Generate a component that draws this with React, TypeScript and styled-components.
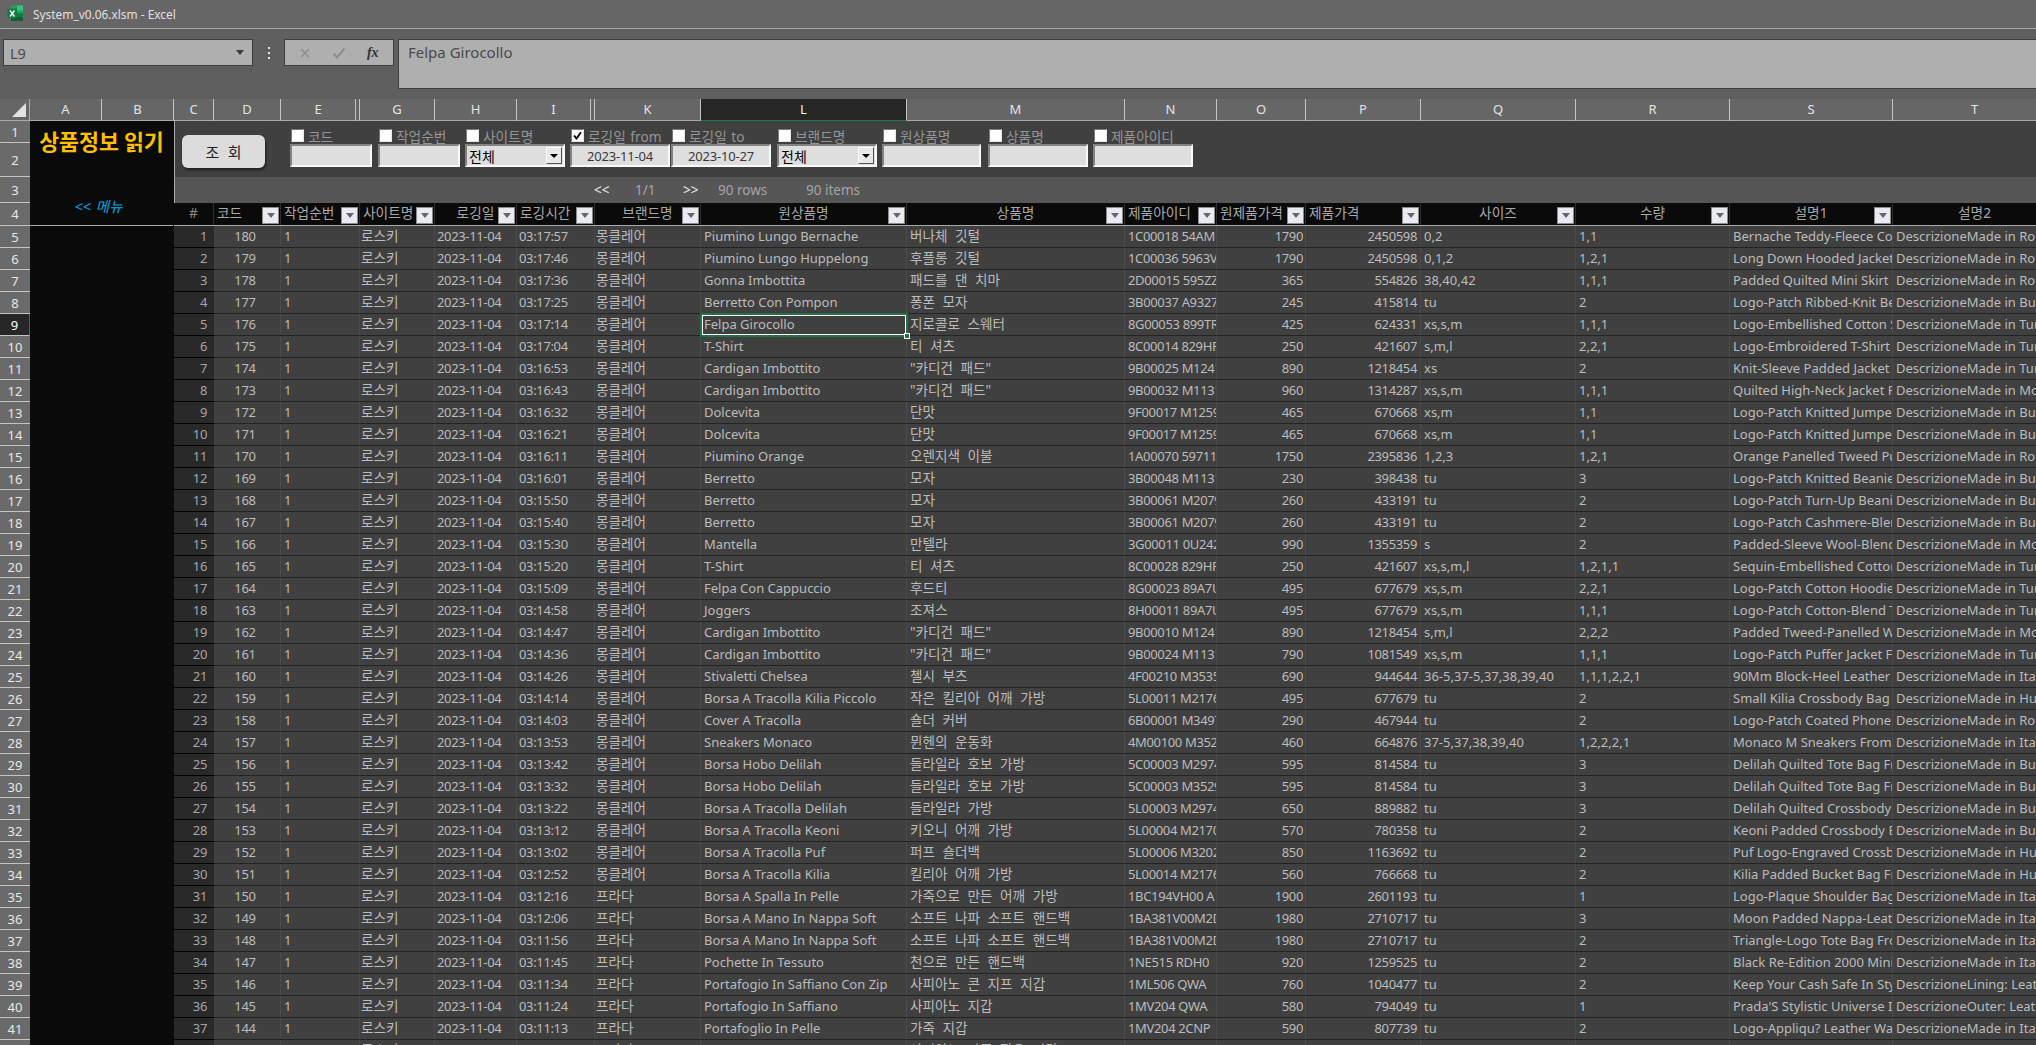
import React from 'react';
import styled, { createGlobalStyle } from 'styled-components';

const FONT = '"Noto Sans", "Noto Sans CJK KR", sans-serif';
const COLS = '40px 67px 79px 75px 82px 78px 106px 206px 218px 92px 89px 115px 155px 154px 163px 164px';

const Global = createGlobalStyle`
  html, body { margin: 0; padding: 0; background: #5f5f5f; overflow: hidden; }
  * { box-sizing: border-box; }
`;

const Page = styled.div`
  width: 2036px; height: 1045px; overflow: hidden; display: flex; flex-direction: column;
  font-family: ${FONT}; background: #5f5f5f;
`;
const TitleBar = styled.div`
  height: 29px; flex: none; display: flex; align-items: center; gap: 9px; padding: 0 0 1px 7px;
  background: #666; border-bottom: 1px solid #a8a8a8; color: #e0e0e0; font-size: 11.9px;
`;
const FormulaBar = styled.div`
  height: 70px; flex: none; display: flex; align-items: flex-start; padding: 10px 0 0 3px; background: #5f5f5f;
`;
const NameBox = styled.div`
  width: 250px; height: 27px; display: flex; align-items: center; justify-content: space-between;
  padding: 0 6px; background: #afafaf; border: 1px solid #3f3f3f; color: #4a4a4a; font-size: 14.5px;
`;
const Caret = styled.span`
  width: 0; height: 0; border-left: 4px solid transparent; border-right: 4px solid transparent;
  border-top: 5px solid #3a3a3a; margin-right: 2px;
`;
const Dots = styled.div`
  width: 31px; height: 27px; display: flex; flex-direction: column; align-items: center; justify-content: center; gap: 3px;
`;
const Dot = styled.i`width: 2px; height: 2px; background: #e6e6e6; display: block;`;
const FxBox = styled.div`
  width: 110px; height: 27px; display: flex; align-items: center; justify-content: space-around; padding: 0 4px;
  background: #afafaf; border: 1px solid #3f3f3f; color: #8d8d8d;
`;
const Fx = styled.span`
  font-family: "Liberation Serif", serif; font-style: italic; font-weight: 700; font-size: 14px; color: #333;
`;
const FormulaInput = styled.div`
  flex: 1; margin-left: 4px; height: 50px; padding: 2px 9px; background: #afafaf;
  border: 1px solid #3f3f3f; border-right: 0; color: #4a4a4a; font-size: 15px;
`;
const ColStrip = styled.div`display: flex; flex: none; height: 22px; background: #666; width: 2100px;`;
const Corner = styled.div`width: 30px; flex: none; display: flex; align-items: center; justify-content: flex-end; padding: 0 3px 0 0; border-bottom: 1px solid #aaa; border-right: 1px solid #aaa;`;
const ColHead = styled.div<{ $w: number; $on?: boolean }>`
  width: ${p => p.$w}px; flex: none; text-align: center; font-size: 13px; line-height: 21px;
  color: ${p => (p.$on ? '#f2f2f2' : '#e4e4e4')};
  background: ${p => (p.$on ? '#262626' : 'transparent')};
  border-right: 1px solid #c4c4c4;
  border-bottom: ${p => (p.$on ? '1px solid #1f7a4a' : '1px solid #aaa')};
`;
const Body = styled.div`display: flex; flex: 1; min-height: 0;`;
const RowHeads = styled.div`width: 30px; flex: none; display: flex; flex-direction: column;`;
const RowHead = styled.div<{ $h: number; $on?: boolean }>`
  height: ${p => p.$h}px; flex: none; display: flex; align-items: center; justify-content: center;
  font-size: 13px; color: ${p => (p.$on ? '#fff' : '#e8e8e8')};
  background: ${p => (p.$on ? '#262626' : '#6a6a6a')};
  border-bottom: 1px solid #c4c4c4;
  border-right: ${p => (p.$on ? '1px solid #1f7a4a' : '0')};
`;
const Side = styled.aside`
  width: 144px; flex: none; background: #0a0a0a; border-right: 1px solid transparent; position: relative;
  display: flex; flex-direction: column; align-items: center;
`;
const SideTitle = styled.h1`
  margin: 6px 0 0; color: #ffc000; font-family: "Noto Sans CJK KR", sans-serif; font-weight: 700; font-size: 21.7px; line-height: 28px;
`;
const MenuLink = styled.div`
  margin-top: 40px; color: #00a8e8; font-style: italic; font-size: 14.5px; line-height: 22px; margin-left: -6px; word-spacing: 1px;
`;
const FreezeLine = styled.div`
  position: absolute; left: 0; right: 0; top: 104px; height: 1px; background: #aaa;
`;
const Main = styled.main`
  flex: 1; min-width: 0; border-left: 1px solid #aaa; margin-left: 0; display: flex; flex-direction: column; width: 1883px;
`;
const FilterBar = styled.div`
  height: 56px; flex: none; background: #404040; display: flex; padding: 6px 0 0 7px; width: 1900px;
`;
const SearchBtn = styled.div`
  width: 83px; height: 33px; margin: 8px 25px 0 0; flex: none; border-radius: 6px; background: #dcdcdc;
  box-shadow: 1px 2px 3px rgba(0,0,0,.55); color: #222; font-size: 15px; display: flex; align-items: center; justify-content: center;
  font-family: "Noto Sans CJK KR", sans-serif; word-spacing: 5px;
`;
const FilterItem = styled.div<{ $w: number; $mr: number }>`
  width: ${p => p.$w}px; margin-right: ${p => p.$mr}px; flex: none; display: flex; flex-direction: column;
`;
const LabelRow = styled.div`
  height: 17px; display: flex; align-items: center; padding-left: 1px; gap: 4px; color: #959595; font-size: 13.7px; white-space: nowrap; word-spacing: 1px;
`;
const Check = styled.span`
  width: 13px; height: 13px; flex: none; background: #fff; border: 1px solid; border-color: #7a7a7a #e6e6e6 #e6e6e6 #7a7a7a;
  display: flex; align-items: center; justify-content: center;
`;
const Field = styled.div`
  height: 23px; background: #dedede; margin-top: 0; border: 2px solid; border-color: #828282 #fafafa #fafafa #828282;
  display: flex; align-items: center; justify-content: center; color: #3a3a3a; font-size: 13px; letter-spacing: -.2px;
`;
const SelectField = styled(Field)`
  justify-content: space-between; color: #000; font-family: "Noto Sans CJK KR", sans-serif; font-size: 14px; padding: 0 1px 0 2px; letter-spacing: 0;
`;
const SelectBtn = styled.span`
  width: 16px; height: 17px; background: #e8e8e8; border: 1px solid; border-color: #fff #555 #555 #fff;
  display: flex; align-items: center; justify-content: center;
`;
const BlackCaret = styled.span`
  width: 0; height: 0; border-left: 4px solid transparent; border-right: 4px solid transparent; border-top: 4px solid #000;
`;
const Pager = styled.div`
  height: 26px; flex: none; background: #565656; display: flex; align-items: center; padding-left: 419px; color: #a0a0a0; font-size: 13.5px; width: 1900px;
`;
const PagerItem = styled.span<{ $w: number; $bright?: boolean }>`
  width: ${p => p.$w}px; flex: none; color: ${p => (p.$bright ? '#ededed' : '#a4a4a4')};
`;
const Head = styled.div`
  display: grid; grid-template-columns: ${COLS}; height: 23px; flex: none; background: #0a0a0a;
  border-bottom: 1px solid #aaa; width: 1883px; margin-left: -1px;
`;
const HeadCell = styled.div<{ $center?: boolean; $dim?: boolean }>`
  position: relative; font-size: 13.7px; line-height: 20px; white-space: nowrap; overflow: hidden;
  text-align: ${p => (p.$center ? 'center' : 'left')}; padding: 0 3px;
  color: ${p => (p.$dim ? '#8a8a8a' : '#a8a8a8')}; border-right: 1px solid #2e2e2e;
`;
const FilterBtn = styled.span`
  position: absolute; right: 1px; top: 4px; width: 17px; height: 17px; background: #eaeaf2;
  border: 1px solid #8c8c8c; display: flex; align-items: center; justify-content: center;
`;
const GrayCaret = styled.span`
  width: 0; height: 0; border-left: 4px solid transparent; border-right: 4px solid transparent; border-top: 5px solid #666;
`;
const Row = styled.div`
  display: grid; grid-template-columns: ${COLS}; height: 22px; flex: none; background: #404040;
  border-bottom: 1px solid #232323; width: 1883px; margin-left: -1px;
`;
const Cell = styled.div<{ $align?: string; $pad?: number }>`
  position: relative; font-size: 13px; line-height: 21px; white-space: nowrap; overflow: hidden;
  text-align: ${p => p.$align || 'left'}; padding: 0 ${p => p.$pad ?? 3}px;
  color: #bcbcbc; border-right: 1px solid #4b4b4b;
`;
const NumCell = styled(Cell)`letter-spacing: -.35px;`;
const CodeCell = styled(NumCell)`text-align: center; padding: 0 4px 0 0;`;
const KoCell = styled(Cell)`font-size: 13.6px; line-height: 19px; word-spacing: 4px;`;
const IndexCell = styled(NumCell)`
  background: #292929; text-align: right; padding-right: 7px; color: #a6a6a6; border-right: 0;
  box-shadow: 0 1px 0 #000;
`;
const SelectedCell = styled(Cell)`overflow: visible; z-index: 2;`;
const SelectionBox = styled.div`
  position: absolute; left: -1px; right: -2px; top: -1px; bottom: -2px; border: 2px solid #217346; pointer-events: none;
  box-shadow: inset 0 0 0 1px #fff;
`;
const Handle = styled.div`
  position: absolute; right: -4px; bottom: -4px; width: 6px; height: 6px; background: #217346; border: 1px solid #fff;
`;

const COL_HEADS: [string, number][] = [
  ['A', 72], ['B', 72], ['C', 40], ['D', 67], ['E', 75], ['', 4], ['G', 75], ['H', 82], ['I', 74], ['', 4],
  ['K', 106], ['L', 206], ['M', 218], ['N', 92], ['O', 89], ['P', 115], ['Q', 155], ['R', 154], ['S', 163], ['T', 164],
];

const FILTERS: { label: string; kind: 'text' | 'select'; value?: string; checked?: boolean; w: number; mr: number }[] = [
  { label: '코드', kind: 'text', w: 82, mr: 6 },
  { label: '작업순번', kind: 'text', w: 82, mr: 5 },
  { label: '사이트명', kind: 'select', value: '전체', w: 100, mr: 5 },
  { label: '로깅일 from', kind: 'text', value: '2023-11-04', checked: true, w: 100, mr: 1 },
  { label: '로깅일 to', kind: 'text', value: '2023-10-27', w: 100, mr: 6 },
  { label: '브랜드명', kind: 'select', value: '전체', w: 100, mr: 5 },
  { label: '원상품명', kind: 'text', w: 99, mr: 7 },
  { label: '상품명', kind: 'text', w: 100, mr: 5 },
  { label: '제품아이디', kind: 'text', w: 100, mr: 0 },
];

const HEADS: { t: string; c?: boolean; btn?: boolean; dim?: boolean }[] = [
  { t: '#', c: true, dim: true }, { t: '코드', btn: true }, { t: '작업순번', btn: true }, { t: '사이트명', btn: true },
  { t: '로깅일', c: true, btn: true }, { t: '로깅시간', btn: true }, { t: '브랜드명', c: true, btn: true },
  { t: '원상품명', c: true, btn: true }, { t: '상품명', c: true, btn: true }, { t: '제품아이디', btn: true },
  { t: '원제품가격', btn: true }, { t: '제품가격', btn: true }, { t: '사이즈', c: true, btn: true },
  { t: '수량', c: true, btn: true }, { t: '설명1', c: true, btn: true }, { t: '설명2', c: true },
];

type D = [string, string, string, string, string, string, string, string, string, string, string];
const M = '몽클레어';
const P = '프라다';
const DATA: D[] = [
  ['03:17:57', M, 'Piumino Lungo Bernache', '버나체 깃털', '1C00018 54AM', '1790', '2450598', '0,2', '1,1', 'Bernache Teddy-Fleece Coat', 'Made in Romania'],
  ['03:17:46', M, 'Piumino Lungo Huppelong', '후플롱 깃털', '1C00036 5963V', '1790', '2450598', '0,1,2', '1,2,1', 'Long Down Hooded Jacket', 'Made in Romania'],
  ['03:17:36', M, 'Gonna Imbottita', '패드를 댄 치마', '2D00015 595ZZ', '365', '554826', '38,40,42', '1,1,1', 'Padded Quilted Mini Skirt', 'Made in Romania'],
  ['03:17:25', M, 'Berretto Con Pompon', '퐁폰 모자', '3B00037 A9327', '245', '415814', 'tu', '2', 'Logo-Patch Ribbed-Knit Beanie', 'Made in Bulgaria'],
  ['03:17:14', M, 'Felpa Girocollo', '지로콜로 스웨터', '8G00053 899TR', '425', '624331', 'xs,s,m', '1,1,1', 'Logo-Embellished Cotton Sweater', 'Made in Turkey'],
  ['03:17:04', M, 'T-Shirt', '티 셔츠', '8C00014 829HP', '250', '421607', 's,m,l', '2,2,1', 'Logo-Embroidered T-Shirt', 'Made in Turkey'],
  ['03:16:53', M, 'Cardigan Imbottito', '"카디건 패드"', '9B00025 M1241', '890', '1218454', 'xs', '2', 'Knit-Sleeve Padded Jacket', 'Made in Turkey'],
  ['03:16:43', M, 'Cardigan Imbottito', '"카디건 패드"', '9B00032 M1131', '960', '1314287', 'xs,s,m', '1,1,1', 'Quilted High-Neck Jacket From', 'Made in Moldova'],
  ['03:16:32', M, 'Dolcevita', '단맛', '9F00017 M1259', '465', '670668', 'xs,m', '1,1', 'Logo-Patch Knitted Jumper', 'Made in Bulgaria'],
  ['03:16:21', M, 'Dolcevita', '단맛', '9F00017 M1259', '465', '670668', 'xs,m', '1,1', 'Logo-Patch Knitted Jumper', 'Made in Bulgaria'],
  ['03:16:11', M, 'Piumino Orange', '오렌지색 이불', '1A00070 59711', '1750', '2395836', '1,2,3', '1,2,1', 'Orange Panelled Tweed Puffer', 'Made in Romania'],
  ['03:16:01', M, 'Berretto', '모자', '3B00048 M1131', '230', '398438', 'tu', '3', 'Logo-Patch Knitted Beanie', 'Made in Bulgaria'],
  ['03:15:50', M, 'Berretto', '모자', '3B00061 M2079', '260', '433191', 'tu', '2', 'Logo-Patch Turn-Up Beanie', 'Made in Bulgaria'],
  ['03:15:40', M, 'Berretto', '모자', '3B00061 M2079', '260', '433191', 'tu', '2', 'Logo-Patch Cashmere-Blend', 'Made in Bulgaria'],
  ['03:15:30', M, 'Mantella', '만텔라', '3G00011 0U242', '990', '1355359', 's', '2', 'Padded-Sleeve Wool-Blend Cape', 'Made in Moldova'],
  ['03:15:20', M, 'T-Shirt', '티 셔츠', '8C00028 829HP', '250', '421607', 'xs,s,m,l', '1,2,1,1', 'Sequin-Embellished Cotton', 'Made in Turkey'],
  ['03:15:09', M, 'Felpa Con Cappuccio', '후드티', '8G00023 89A7U', '495', '677679', 'xs,s,m', '2,2,1', 'Logo-Patch Cotton Hoodie', 'Made in Turkey'],
  ['03:14:58', M, 'Joggers', '조져스', '8H00011 89A7U', '495', '677679', 'xs,s,m', '1,1,1', 'Logo-Patch Cotton-Blend Track', 'Made in Turkey'],
  ['03:14:47', M, 'Cardigan Imbottito', '"카디건 패드"', '9B00010 M1241', '890', '1218454', 's,m,l', '2,2,2', 'Padded Tweed-Panelled Wool', 'Made in Moldova'],
  ['03:14:36', M, 'Cardigan Imbottito', '"카디건 패드"', '9B00024 M1131', '790', '1081549', 'xs,s,m', '1,1,1', 'Logo-Patch Puffer Jacket From', 'Made in Turkey'],
  ['03:14:26', M, 'Stivaletti Chelsea', '첼시 부츠', '4F00210 M3535', '690', '944644', '36-5,37-5,37,38,39,40', '1,1,1,2,2,1', '90Mm Block-Heel Leather', 'Made in Italy'],
  ['03:14:14', M, 'Borsa A Tracolla Kilia Piccolo', '작은 킬리아 어깨 가방', '5L00011 M2176', '495', '677679', 'tu', '2', 'Small Kilia Crossbody Bag', 'Made in Hungary'],
  ['03:14:03', M, 'Cover A Tracolla', '숄더 커버', '6B00001 M3497', '290', '467944', 'tu', '2', 'Logo-Patch Coated Phone', 'Made in Romania'],
  ['03:13:53', M, 'Sneakers Monaco', '뮌헨의 운동화', '4M00100 M352', '460', '664876', '37-5,37,38,39,40', '1,2,2,2,1', 'Monaco M Sneakers From', 'Made in Italy'],
  ['03:13:42', M, 'Borsa Hobo Delilah', '들라일라 호보 가방', '5C00003 M2974', '595', '814584', 'tu', '3', 'Delilah Quilted Tote Bag From', 'Made in Bulgaria'],
  ['03:13:32', M, 'Borsa Hobo Delilah', '들라일라 호보 가방', '5C00003 M3529', '595', '814584', 'tu', '3', 'Delilah Quilted Tote Bag From', 'Made in Bulgaria'],
  ['03:13:22', M, 'Borsa A Tracolla Delilah', '들라일라 가방', '5L00003 M2974', '650', '889882', 'tu', '3', 'Delilah Quilted Crossbody', 'Made in Bulgaria'],
  ['03:13:12', M, 'Borsa A Tracolla Keoni', '키오니 어깨 가방', '5L00004 M2170', '570', '780358', 'tu', '2', 'Keoni Padded Crossbody Bag', 'Made in Bulgaria'],
  ['03:13:02', M, 'Borsa A Tracolla Puf', '퍼프 숄더백', '5L00006 M3202', '850', '1163692', 'tu', '2', 'Puf Logo-Engraved Crossbody', 'Made in Hungary'],
  ['03:12:52', M, 'Borsa A Tracolla Kilia', '킬리아 어깨 가방', '5L00014 M2176', '560', '766668', 'tu', '2', 'Kilia Padded Bucket Bag From', 'Made in Hungary'],
  ['03:12:16', P, 'Borsa A Spalla In Pelle', '가죽으로 만든 어깨 가방', '1BC194VH00 A', '1900', '2601193', 'tu', '1', 'Logo-Plaque Shoulder Bag', 'Made in Italy'],
  ['03:12:06', P, 'Borsa A Mano In Nappa Soft', '소프트 나파 소프트 핸드백', '1BA381V00M2D', '1980', '2710717', 'tu', '3', 'Moon Padded Nappa-Leather', 'Made in Italy'],
  ['03:11:56', P, 'Borsa A Mano In Nappa Soft', '소프트 나파 소프트 핸드백', '1BA381V00M2D', '1980', '2710717', 'tu', '2', 'Triangle-Logo Tote Bag From', 'Made in Italy'],
  ['03:11:45', P, 'Pochette In Tessuto', '천으로 만든 핸드백', '1NE515 RDH0', '920', '1259525', 'tu', '2', 'Black Re-Edition 2000 Mini Bag', 'Made in Italy'],
  ['03:11:34', P, 'Portafogio In Saffiano Con Zip', '사피아노 콘 지프 지갑', '1ML506 QWA', '760', '1040477', 'tu', '2', 'Keep Your Cash Safe In Style', 'Lining: Leather'],
  ['03:11:24', P, 'Portafogio In Saffiano', '사피아노 지갑', '1MV204 QWA', '580', '794049', 'tu', '1', "Prada'S Stylistic Universe Is", 'Outer: Leather'],
  ['03:11:13', P, 'Portafoglio In Pelle', '가죽 지갑', '1MV204 2CNP', '590', '807739', 'tu', '2', 'Logo-Appliqu? Leather Wallet', 'Made in Italy'],
  ['03:11:03', P, 'Portafoglio In Saffiano', '사피아노 가죽 작은 지갑', '1MV204 QWA', '590', '807739', 'tu', '2', 'Logo-Plaque Leather Wallet', 'Made in Italy'],
];

const ROW_HEADS = Array.from({ length: 42 }, (_, i) => i + 1);
const rowHeight = (n: number) => (n === 1 ? 22 : n === 2 ? 34 : n === 3 ? 26 : n === 4 ? 23 : 22);

const ExcelLogo = () => (
  <svg width="17" height="17" viewBox="0 0 17 17">
    <rect x="4" y="0.5" width="12" height="15.5" rx="1" fill="#21a366" />
    <rect x="10" y="0.5" width="6" height="5" fill="#33c481" />
    <rect x="4" y="8" width="12" height="4" fill="#107c41" />
    <rect x="4" y="12" width="12" height="4" fill="#185c37" />
    <rect x="0.5" y="3.5" width="9.5" height="9.5" rx="1" fill="#107c41" />
    <path d="M3 5.5l4.5 6M7.5 5.5l-4.5 6" stroke="#fff" strokeWidth="1.4" />
  </svg>
);
const CornerMark = () => (
  <svg width="14" height="14" viewBox="0 0 14 14"><path d="M14 0v14H0z" fill="#e2e2e2" /></svg>
);
const Cross = () => (
  <svg width="12" height="12" viewBox="0 0 12 12"><path d="M2 2l8 8M10 2l-8 8" stroke="currentColor" strokeWidth="1.6" /></svg>
);
const Tick = () => (
  <svg width="14" height="12" viewBox="0 0 14 12"><path d="M1.5 6.5l3.5 4 7.5-9" stroke="currentColor" strokeWidth="2" fill="none" /></svg>
);
const CheckMark = () => (
  <svg width="9" height="9" viewBox="0 0 9 9"><path d="M1 4.5l2.5 3L8 1.2" stroke="#000" strokeWidth="1.9" fill="none" /></svg>
);

export default function App() {
  return (
    <Page>
      <Global />
      <TitleBar><ExcelLogo /><span>System_v0.06.xlsm - Excel</span></TitleBar>
      <FormulaBar>
        <NameBox>L9<Caret /></NameBox>
        <Dots><Dot /><Dot /><Dot /></Dots>
        <FxBox><Cross /><Tick /><Fx>fx</Fx></FxBox>
        <FormulaInput>Felpa Girocollo</FormulaInput>
      </FormulaBar>
      <ColStrip>
        <Corner><CornerMark /></Corner>
        {COL_HEADS.map(([t, w], i) => <ColHead key={i} $w={w} $on={t === 'L'}>{t}</ColHead>)}
      </ColStrip>
      <Body>
        <RowHeads>
          {ROW_HEADS.map(n => <RowHead key={n} $h={rowHeight(n)} $on={n === 9}>{n}</RowHead>)}
        </RowHeads>
        <Side>
          <SideTitle>상품정보 읽기</SideTitle>
          <MenuLink>&lt;&lt; 메뉴</MenuLink>
          <FreezeLine />
        </Side>
        <Main>
          <FilterBar>
            <SearchBtn>조 회</SearchBtn>
            {FILTERS.map(f => (
              <FilterItem key={f.label} $w={f.w} $mr={f.mr}>
                <LabelRow><Check>{f.checked && <CheckMark />}</Check>{f.label}</LabelRow>
                {f.kind === 'select'
                  ? <SelectField>{f.value}<SelectBtn><BlackCaret /></SelectBtn></SelectField>
                  : <Field>{f.value}</Field>}
              </FilterItem>
            ))}
          </FilterBar>
          <Pager>
            <PagerItem $w={41} $bright>&lt;&lt;</PagerItem>
            <PagerItem $w={48}>1/1</PagerItem>
            <PagerItem $w={35} $bright>&gt;&gt;</PagerItem>
            <PagerItem $w={88}>90 rows</PagerItem>
            <PagerItem $w={60}>90 items</PagerItem>
          </Pager>
          <Head>
            {HEADS.map(h => (
              <HeadCell key={h.t} $center={h.c} $dim={h.dim}>
                {h.t}
                {h.btn && <FilterBtn><GrayCaret /></FilterBtn>}
              </HeadCell>
            ))}
          </Head>
          {DATA.map((d, i) => {
            const selected = i === 4;
            const NameCell = selected ? SelectedCell : Cell;
            return (
              <Row key={i}>
                <IndexCell>{i + 1}</IndexCell>
                <CodeCell>{180 - i}</CodeCell>
                <Cell>1</Cell>
                <KoCell $pad={1}>로스키</KoCell>
                <NumCell $pad={2}>2023-11-04</NumCell>
                <NumCell $pad={2}>{d[0]}</NumCell>
                <KoCell $pad={1}>{d[1]}</KoCell>
                <NameCell>
                  {d[2]}
                  {selected && <SelectionBox><Handle /></SelectionBox>}
                </NameCell>
                <KoCell>{d[3]}</KoCell>
                <NumCell>{d[4]}</NumCell>
                <NumCell $align="right" $pad={2}>{d[5]}</NumCell>
                <NumCell $align="right">{d[6]}</NumCell>
                <Cell>{d[7]}</Cell>
                <Cell>{d[8]}</Cell>
                <Cell>{d[9]}</Cell>
                <Cell>Descrizione{d[10]}</Cell>
              </Row>
            );
          })}
        </Main>
      </Body>
    </Page>
  );
}
